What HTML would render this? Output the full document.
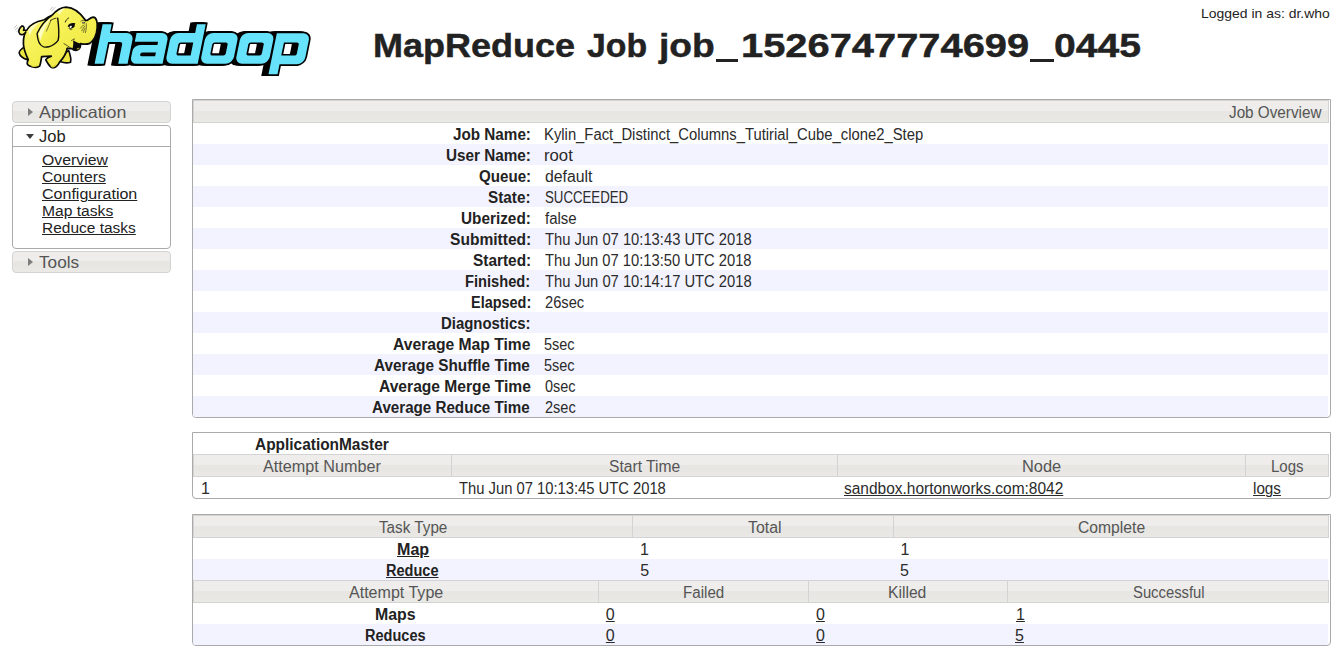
<!DOCTYPE html>
<html>
<head>
<meta charset="utf-8">
<title>MapReduce Job job_1526747774699_0445</title>
<style>
html,body{margin:0;padding:0;background:#fff;}
body{width:1341px;height:654px;position:relative;overflow:hidden;font-family:"Liberation Sans",sans-serif;color:#222;}
*{box-sizing:border-box;}
#logo{position:absolute;left:0;top:0;}
.x{position:absolute;white-space:nowrap;transform-origin:0 0;color:#222;line-height:20px;font-size:16px;}
a.x{text-decoration:underline;}
.b{font-weight:bold;}
.n{color:#2b2b2b;}
.h{color:#555;}
.s1{color:#555;font-size:16.5px;}
.s2{color:#222;font-size:16.5px;}
.sl{font-size:14px;}
.u{font-size:12.6px;}
.tt{font-size:34px;font-weight:bold;line-height:40px;-webkit-text-stroke:0.45px #222;}
.us{position:absolute;top:58.6px;height:3.4px;background:#222;}
.nbtn{position:absolute;left:12px;width:159px;height:22px;border:1px solid #d3d3d3;border-radius:4px;background:linear-gradient(#eeedeb 0,#eeedeb 47%,#e7e6e3 47%,#e7e6e3 70%,#eae9e6 100%);}
.nbtn i{position:absolute;left:15px;top:6px;width:0;height:0;border-left:5px solid #7d7d7d;border-top:4px solid transparent;border-bottom:4px solid transparent;}
#jobbox{position:absolute;left:12px;top:125px;width:159px;height:124px;border:1px solid #aaa;border-radius:4px;background:#fff;}
#jobhead{position:absolute;left:0;top:0;width:157px;height:21px;border-bottom:1px solid #aaa;}
#jobhead i{position:absolute;left:13px;top:8px;width:0;height:0;border-top:5px solid #3c3c3c;border-left:4px solid transparent;border-right:4px solid transparent;}
.panel{position:absolute;left:192px;width:1139px;border:1px solid #aaa;border-radius:0 0 4px 4px;background:#fff;}
.hdr{position:absolute;height:23px;background:linear-gradient(#eeedeb 0,#eeedeb 47%,#e7e6e3 47%,#e7e6e3 70%,#eae9e6 100%);border:1px solid #d3d3d3;}
.row{position:absolute;left:193px;width:1135px;height:21px;}
.odd{background:#fff;}
.even{background:#f3f3ff;}
</style>
</head>
<body>
<svg id="logo" width="340" height="95" viewBox="0 0 340 95">
<defs><linearGradient id="eg" x1="0" y1="0" x2="1" y2="1"><stop offset="0" stop-color="#faf678"/><stop offset="0.5" stop-color="#f5f052"/><stop offset="1" stop-color="#ebe53e"/></linearGradient><path id="hw" d="M94.6,24.3H103.7V33H120.6A7,7 0 0 1 127.6,40V63.8H118.2V44.5A2.5,2.5 0 0 0 115.7,42H103.7V63.8H94.6ZM130.3,33H155.6A7,7 0 0 1 162.6,40V63.8H136.3A6.5,6.5 0 0 1 129.8,57.3V51.4A6.5,6.5 0 0 1 136.3,44.9H153.6V41.7H130.3ZM140.20000000000002,52.4H153.6V56.2H140.20000000000002A1.9,1.9 0 0 1 140.20000000000002,52.4ZM172.1,33H188.9V24.3H197.7V63.8H172.1A7,7 0 0 1 165.1,56.8V40A7,7 0 0 1 172.1,33ZM176.6,42.4H188.9V55.4H176.6A2.2,2.2 0 0 1 174.4,53.199999999999996V44.6A2.2,2.2 0 0 1 176.6,42.4ZM206.9,33H225.6A7,7 0 0 1 232.6,40V56.8A7,7 0 0 1 225.6,63.8H206.9A7,7 0 0 1 199.9,56.8V40A7,7 0 0 1 206.9,33ZM210.5,42.4H221.5A2.2,2.2 0 0 1 223.7,44.6V53.199999999999996A2.2,2.2 0 0 1 221.5,55.4H210.5A2.2,2.2 0 0 1 208.3,53.199999999999996V44.6A2.2,2.2 0 0 1 210.5,42.4ZM242.0,33H261.4A7,7 0 0 1 268.4,40V56.8A7,7 0 0 1 261.4,63.8H242.0A7,7 0 0 1 235.0,56.8V40A7,7 0 0 1 242.0,33ZM246.6,42.4H257.6A2.2,2.2 0 0 1 259.8,44.6V53.199999999999996A2.2,2.2 0 0 1 257.6,55.4H246.6A2.2,2.2 0 0 1 244.4,53.199999999999996V44.6A2.2,2.2 0 0 1 246.6,42.4ZM270.6,33.2H297.0A7,7 0 0 1 304.0,40.2V57.2A7,7 0 0 1 297.0,64.2H279.6V74.2H270.6ZM279.6,42.4H292.6A2.2,2.2 0 0 1 294.8,44.6V53.4A2.2,2.2 0 0 1 292.6,55.6H279.6Z"/></defs>
<g transform="matrix(1 0 -0.203 1 12.951 0)" fill-rule="evenodd">
<use href="#hw" x="0" stroke="#000" stroke-width="3.4" stroke-linejoin="miter" fill="#000"/><use href="#hw" x="-1.3" stroke="#000" stroke-width="3.4" stroke-linejoin="miter" fill="#000"/><use href="#hw" x="-2.6" stroke="#000" stroke-width="3.4" stroke-linejoin="miter" fill="#000"/><use href="#hw" x="-3.9" stroke="#000" stroke-width="3.4" stroke-linejoin="miter" fill="#000"/><use href="#hw" x="-5.2" stroke="#000" stroke-width="3.4" stroke-linejoin="miter" fill="#000"/>
<use href="#hw" fill="#66e3fb"/>
</g>
<g transform="translate(10 0) scale(0.11468)" stroke-linejoin="round" stroke-linecap="round">
<!-- motion lines -->
<g stroke="#8a8a8a" stroke-width="5" fill="none">
<path d="M38,243 L60,220"/><path d="M46,262 L70,238"/><path d="M58,278 L76,260"/>
<path d="M352,82 L372,60"/><path d="M362,96 L392,66"/>
</g>
<!-- far legs -->
<path fill="#ece63f" stroke="#0a0a0a" stroke-width="14" d="M125,408 C100,425 78,445 80,462 C86,485 110,508 150,520 L170,470 Z"/>
<path fill="#ece63f" stroke="#0a0a0a" stroke-width="14" d="M470,470 C456,498 442,520 437,537 C470,549 510,549 528,542 C535,520 526,480 512,440 Z"/>
<!-- body -->
<path fill="url(#eg)" stroke="#0a0a0a" stroke-width="15" d="M489,62 C555,64 618,118 660,178 C672,186 690,158 725,150 C758,150 764,205 760,245 C756,300 738,348 696,378 C660,392 630,384 614,380 C618,405 606,430 582,438 C566,442 550,434 538,424 C520,425 505,420 498,424 C494,455 474,496 434,540 C422,562 405,585 385,590 C362,594 345,575 335,560 C325,545 315,530 312,520 C320,508 340,498 360,490 C335,490 300,492 276,494 C272,520 268,555 258,577 C245,588 215,588 190,582 C165,576 150,565 150,552 C150,540 156,528 159,520 C140,480 118,420 117,382 C115,340 122,305 138,278 C125,300 100,310 85,295 C68,278 78,245 105,226 C125,228 126,250 118,264 C130,262 140,262 146,262 C165,225 215,190 300,172 C330,150 350,140 366,134 C395,100 440,64 489,62 Z"/>
<!-- highlights -->
<path fill="#fdfcc4" d="M408,108 C430,86 455,76 480,74 C458,88 446,104 436,128 C428,120 418,112 408,108 Z"/>
<path fill="#fdfcc4" d="M158,262 C185,222 225,202 270,190 C225,215 195,255 172,310 C166,290 160,275 158,262 Z"/>
<!-- inner shading -->
<path fill="#ddd736" d="M165,560 C190,578 225,580 250,560 C240,580 215,586 190,580 Z"/>
<path fill="#ddd736" d="M345,565 C365,585 392,575 420,540 C405,575 385,590 365,588 Z"/>
<!-- near front leg edge -->
<path fill="none" stroke="#111" stroke-width="8" d="M434,540 C468,500 492,458 500,415"/>
<!-- cheek line -->
<path fill="none" stroke="#111" stroke-width="6" d="M540,426 C515,408 490,392 470,380"/>
<!-- ear -->
<path fill="url(#eg)" stroke="#0a0a0a" stroke-width="12" d="M366,134 C320,165 268,225 236,292 C240,330 250,370 262,384 C275,408 310,415 338,408 C370,398 400,378 420,352 C432,300 424,220 416,158"/>
<path fill="#fdfcc4" d="M362,150 C315,185 272,240 250,292 C256,318 260,338 266,352 C285,280 318,212 362,150 Z"/>
<path fill="none" stroke="#111" stroke-width="7" d="M352,178 C368,168 385,162 402,158"/>
<path fill="none" stroke="#111" stroke-width="5" d="M356,180 C345,210 330,245 318,272"/>
<!-- eyebrow + eye -->
<path fill="none" stroke="#111" stroke-width="8" d="M482,192 C488,176 498,164 511,157"/>
<path fill="#0a0a0a" d="M502,228 C514,204 544,194 570,204 C566,213 560,220 565,228 C556,244 536,252 518,249 C520,240 512,233 502,228 Z"/>
<path fill="#fff" d="M519,236 C523,226 532,223 540,228 C538,240 529,245 521,244 Z"/>
<path fill="none" stroke="#0a0a0a" stroke-width="5" d="M516,250 C522,260 530,262 540,257"/>
<!-- other eye + wrinkles -->
<path fill="#333" d="M626,198 C634,186 650,188 656,198 C648,208 634,208 626,198 Z"/>
<path fill="#fff" d="M632,196 C636,192 642,192 644,196 C640,200 636,200 632,196 Z"/>
<path fill="none" stroke="#111" stroke-width="5" d="M618,184 C630,174 648,174 660,184"/>
<path fill="none" stroke="#111" stroke-width="5" d="M665,205 C668,235 664,262 658,284 M614,246 C624,232 634,224 646,218 M626,268 C634,250 642,238 652,228 M640,282 C644,266 648,254 654,246"/>
<!-- mouth -->
<path fill="#0a0a0a" d="M550,350 C575,366 598,376 620,380 C622,406 610,428 584,438 C568,442 552,432 545,422 C552,400 554,376 550,350 Z"/>
<path fill="#a8a224" d="M580,428 C588,418 598,414 607,416 C604,424 596,430 588,432 C584,432 581,430 580,428 Z"/>
<path fill="none" stroke="#111" stroke-width="6" d="M536,354 C546,346 554,342 563,340"/>
</g>
</svg>
<div class="nbtn" style="top:101px"><i></i></div>
<div id="jobbox"><div id="jobhead"><i></i></div></div>
<div class="nbtn" style="top:251px"><i></i></div>

<div class="panel" style="top:99px;height:319px;"></div>
<div class="hdr" style="left:193px;top:100px;width:1136px"></div>
<div class="row odd" style="top:123px"></div><div class="row even" style="top:144px"></div><div class="row odd" style="top:165px"></div><div class="row even" style="top:186px"></div><div class="row odd" style="top:207px"></div><div class="row even" style="top:228px"></div><div class="row odd" style="top:249px"></div><div class="row even" style="top:270px"></div><div class="row odd" style="top:291px"></div><div class="row even" style="top:312px"></div><div class="row odd" style="top:333px"></div><div class="row even" style="top:354px"></div><div class="row odd" style="top:375px"></div><div class="row even" style="top:396px;border-radius:0 0 3px 3px"></div>

<div class="panel" style="top:432px;height:67px;"></div>
<div class="hdr" style="left:193px;top:454px;width:259px"></div><div class="hdr" style="left:451px;top:454px;width:387px"></div><div class="hdr" style="left:837px;top:454px;width:409px"></div><div class="hdr" style="left:1245px;top:454px;width:84px"></div>

<div class="panel" style="top:514px;height:132px;"></div>
<div class="hdr" style="left:193px;top:515px;width:440px"></div><div class="hdr" style="left:632px;top:515px;width:262px"></div><div class="hdr" style="left:893px;top:515px;width:436px"></div>
<div class="row even" style="top:559px"></div>
<div class="hdr" style="left:193px;top:580px;width:406px"></div><div class="hdr" style="left:598px;top:580px;width:211px"></div><div class="hdr" style="left:808px;top:580px;width:200px"></div><div class="hdr" style="left:1007px;top:580px;width:322px"></div>
<div class="row even" style="top:624px;border-radius:0 0 3px 3px"></div>

<span id="l1" class="x b" style="left:452.81px;top:125.46px;transform:scaleX(0.9528)">Job Name:</span>
<span id="v1" class="x n" style="left:544.08px;top:125.46px;transform:scaleX(0.9261)">Kylin_Fact_Distinct_Columns_Tutirial_Cube_clone2_Step</span>
<span id="l2" class="x b" style="left:445.59px;top:146.46px;transform:scaleX(0.9540)">User Name:</span>
<span id="v2" class="x n" style="left:544.38px;top:146.46px;transform:scaleX(1.0438)">root</span>
<span id="l3" class="x b" style="left:479.01px;top:167.46px;transform:scaleX(0.9448)">Queue:</span>
<span id="v3" class="x n" style="left:544.56px;top:167.46px;transform:scaleX(0.9879)">default</span>
<span id="l4" class="x b" style="left:488.40px;top:188.46px;transform:scaleX(0.9561)">State:</span>
<span id="v4" class="x n" style="left:545.26px;top:188.46px;transform:scaleX(0.8271)">SUCCEEDED</span>
<span id="l5" class="x b" style="left:461.21px;top:209.46px;transform:scaleX(0.9583)">Uberized:</span>
<span id="v5" class="x n" style="left:545.08px;top:209.46px;transform:scaleX(0.9365)">false</span>
<span id="l6" class="x b" style="left:449.72px;top:230.46px;transform:scaleX(0.9730)">Submitted:</span>
<span id="v6" class="x n" style="left:544.76px;top:230.46px;transform:scaleX(0.9220)">Thu Jun 07 10:13:43 UTC 2018</span>
<span id="l7" class="x b" style="left:472.97px;top:251.46px;transform:scaleX(0.9620)">Started:</span>
<span id="v7" class="x n" style="left:545.05px;top:251.46px;transform:scaleX(0.9215)">Thu Jun 07 10:13:50 UTC 2018</span>
<span id="l8" class="x b" style="left:465.37px;top:272.46px;transform:scaleX(0.9159)">Finished:</span>
<span id="v8" class="x n" style="left:544.76px;top:272.46px;transform:scaleX(0.9220)">Thu Jun 07 10:14:17 UTC 2018</span>
<span id="l9" class="x b" style="left:470.57px;top:293.46px;transform:scaleX(0.9033)">Elapsed:</span>
<span id="v9" class="x n" style="left:544.63px;top:293.46px;transform:scaleX(0.9171)">26sec</span>
<span id="l10" class="x b" style="left:441.01px;top:314.46px;transform:scaleX(0.9322)">Diagnostics:</span>
<span id="l11" class="x b" style="left:392.62px;top:335.46px;transform:scaleX(0.9781)">Average Map Time</span>
<span id="v11" class="x n" style="left:544.42px;top:335.46px;transform:scaleX(0.9032)">5sec</span>
<span id="l12" class="x b" style="left:374.48px;top:356.46px;transform:scaleX(0.9580)">Average Shuffle Time</span>
<span id="v12" class="x n" style="left:544.42px;top:356.46px;transform:scaleX(0.9024)">5sec</span>
<span id="l13" class="x b" style="left:378.90px;top:377.46px;transform:scaleX(0.9755)">Average Merge Time</span>
<span id="v13" class="x n" style="left:544.64px;top:377.46px;transform:scaleX(0.9023)">0sec</span>
<span id="l14" class="x b" style="left:372.47px;top:398.46px;transform:scaleX(0.9476)">Average Reduce Time</span>
<span id="v14" class="x n" style="left:544.81px;top:398.46px;transform:scaleX(0.9080)">2sec</span>
<span id="ho" class="x h" style="left:1228.79px;top:103.46px;transform:scaleX(0.9535)">Job Overview</span>
<span id="am" class="x b" style="left:255.28px;top:435.46px;transform:scaleX(0.9645)">ApplicationMaster</span>
<span id="h21" class="x h" style="left:263.49px;top:457.46px;transform:scaleX(1.0114)">Attempt Number</span>
<span id="h22" class="x h" style="left:609.31px;top:457.46px;transform:scaleX(0.9769)">Start Time</span>
<span id="h23" class="x h" style="left:1022.04px;top:457.46px;transform:scaleX(1.0240)">Node</span>
<span id="h24" class="x h" style="left:1270.99px;top:457.46px;transform:scaleX(0.9390)">Logs</span>
<span id="d21" class="x n" style="left:201.11px;top:479.46px;transform:scaleX(1.0000)">1</span>
<span id="d22" class="x n" style="left:459.00px;top:479.46px;transform:scaleX(0.9227)">Thu Jun 07 10:13:45 UTC 2018</span>
<a id="d23" class="x n" style="left:844.46px;top:479.46px;transform:scaleX(0.9669)">sandbox.hortonworks.com:8042</a>
<a id="d24" class="x n" style="left:1253.03px;top:479.46px;transform:scaleX(0.9527)">logs</a>
<span id="h31" class="x h" style="left:379.41px;top:518.46px;transform:scaleX(0.9524)">Task Type</span>
<span id="h32" class="x h" style="left:747.65px;top:518.46px;transform:scaleX(0.9924)">Total</span>
<span id="h33" class="x h" style="left:1077.55px;top:518.46px;transform:scaleX(0.9799)">Complete</span>
<a id="m1" class="x b" style="left:397.06px;top:540.46px;transform:scaleX(1.0041)">Map</a>
<a id="m2" class="x b" style="left:386.42px;top:561.46px;transform:scaleX(0.9083)">Reduce</a>
<span id="m1t" class="x n" style="left:640.09px;top:540.46px;transform:scaleX(1.0000)">1</span>
<span id="m1c" class="x n" style="left:900.60px;top:540.46px;transform:scaleX(1.0000)">1</span>
<span id="m2t" class="x n" style="left:640.23px;top:561.46px;transform:scaleX(1.0000)">5</span>
<span id="m2c" class="x n" style="left:900.01px;top:561.46px;transform:scaleX(1.0000)">5</span>
<span id="h34" class="x h" style="left:349.42px;top:583.46px;transform:scaleX(1.0027)">Attempt Type</span>
<span id="h35" class="x h" style="left:683.00px;top:583.46px;transform:scaleX(0.9456)">Failed</span>
<span id="h36" class="x h" style="left:888.27px;top:583.46px;transform:scaleX(0.9793)">Killed</span>
<span id="h37" class="x h" style="left:1132.81px;top:583.46px;transform:scaleX(0.9255)">Successful</span>
<span id="a1" class="x b" style="left:375.32px;top:605.46px;transform:scaleX(0.9918)">Maps</span>
<span id="a2" class="x b" style="left:365.46px;top:626.46px;transform:scaleX(0.9078)">Reduces</span>
<a id="a1f" class="x n" style="left:605.84px;top:605.46px;transform:scaleX(1.0000)">0</a>
<a id="a1k" class="x n" style="left:816.00px;top:605.46px;transform:scaleX(1.0000)">0</a>
<a id="a1s" class="x n" style="left:1016.00px;top:605.46px;transform:scaleX(1.0000)">1</a>
<a id="a2f" class="x n" style="left:605.83px;top:626.46px;transform:scaleX(1.0000)">0</a>
<a id="a2k" class="x n" style="left:816.00px;top:626.46px;transform:scaleX(1.0000)">0</a>
<a id="a2s" class="x n" style="left:1015.00px;top:626.46px;transform:scaleX(1.0000)">5</a>
<span id="sa" class="x s1" style="left:38.93px;top:102.28px;transform:scaleX(1.0834)">Application</span>
<span id="sj" class="x s2" style="left:38.50px;top:126.28px;transform:scaleX(0.9997)">Job</span>
<span id="st" class="x s1" style="left:38.97px;top:252.28px;transform:scaleX(1.0420)">Tools</span>
<a id="k1" class="x sl" style="left:42.00px;top:150.15px;transform:scaleX(1.1291)">Overview</a>
<a id="k2" class="x sl" style="left:42.00px;top:167.15px;transform:scaleX(1.1239)">Counters</a>
<a id="k3" class="x sl" style="left:41.97px;top:184.15px;transform:scaleX(1.1441)">Configuration</a>
<a id="k4" class="x sl" style="left:41.97px;top:201.15px;transform:scaleX(1.1161)">Map tasks</a>
<a id="k5" class="x sl" style="left:41.97px;top:218.15px;transform:scaleX(1.1053)">Reduce tasks</a>
<span id="us" class="x u" style="left:1201.20px;top:3.63px;transform:scaleX(1.1075)">Logged in as: dr.who</span>
<span id="t1" class="x tt" style="left:372.66px;top:25.22px;transform:scaleX(1.0591)">MapReduce</span>
<span id="t2" class="x tt" style="left:586.98px;top:25.22px;transform:scaleX(0.9942)">Job</span>
<span id="t3" class="x tt" style="left:659.01px;top:25.22px;transform:scaleX(1.0933)">job</span>
<span id="t5" class="x tt" style="left:741.25px;top:25.22px;transform:scaleX(1.1723)">1526747774699</span>
<span id="t7" class="x tt" style="left:1054.36px;top:25.22px;transform:scaleX(1.1491)">0445</span>
<div class="us" style="left:715.5px;width:22.4px"></div><div class="us" style="left:1030.2px;width:23.4px"></div>
</body>
</html>
